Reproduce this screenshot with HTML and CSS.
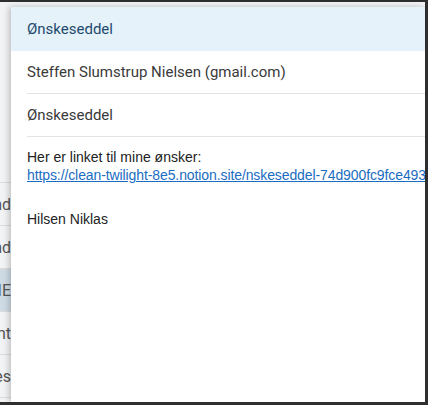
FILE: index.html
```html
<!DOCTYPE html>
<html lang="da">
<head>
<meta charset="utf-8">
<title>Ønskeseddel</title>
<link rel="stylesheet" href="styles.css">
</head>
<body>
<div class="frame">
  <div class="bg-list">
    <div class="bg-top"></div>
    <div class="bg-row"><span>Send</span></div>
    <div class="bg-row"><span>Send</span></div>
    <div class="bg-row selected"><span>NSIE</span></div>
    <div class="bg-row"><span>Print</span></div>
    <div class="bg-row"><span>Notes</span></div>
  </div>
  <div class="panel">
    <div class="panel-header">Ønskeseddel</div>
    <div class="field">Steffen Slumstrup Nielsen (gmail.com)</div>
    <div class="field">Ønskeseddel</div>
    <div class="message">
      <p class="lines">Her er linket til mine ønsker:<br><a href="#" class="link">https://clean-twilight-8e5.notion.site/nskeseddel-74d900fc9fce4930a1b2</a></p>
      <p class="sign">Hilsen Niklas</p>
    </div>
  </div>
</div>
</body>
</html>
```

FILE: styles.css
```css
html, body {
  margin: 0;
  padding: 0;
  background: #ffffff;
}

.frame {
  position: relative;
  width: 428px;
  height: 405px;
  box-sizing: border-box;
  border-top: 2px solid #2e2e2e;
  border-right: 3px solid #2e2e2e;
  border-bottom: 3px solid #2e2e2e;
  background: #f2f3f4;
  overflow: hidden;
  font-family: Roboto, "Liberation Sans", sans-serif;
}

.bg-list {
  width: 11px;
  display: flex;
  flex-direction: column;
}

.bg-top {
  height: 180px;
  border-bottom: 1px solid #dcdcdc;
}

.bg-row {
  height: 42px;
  border-bottom: 1px solid #dcdcdc;
  display: flex;
  justify-content: flex-end;
  align-items: center;
  overflow: hidden;
  font-size: 16px;
  color: #555;
  white-space: nowrap;
}

.bg-row.selected {
  background: #cfdbe4;
}

.panel {
  position: absolute;
  left: 11px;
  top: 5px;
  right: 0;
  bottom: 0;
  background: #ffffff;
  box-shadow: -2px 0 6px rgba(0, 0, 0, 0.22);
  display: flex;
  flex-direction: column;
}

.panel-header {
  height: 44px;
  background: #e5f2f9;
  color: #1f4a6e;
  font-size: 15px;
  display: flex;
  align-items: center;
  padding-left: 16px;
}

.field {
  height: 42px;
  margin-left: 16px;
  border-bottom: 1px solid #e3e3e3;
  display: flex;
  align-items: center;
  font-size: 15px;
  color: #3a3a3a;
}

.message {
  padding: 11px 0 0 16px;
  font-family: "Liberation Sans", Arial, sans-serif;
  font-size: 14px;
  color: #222;
}

.message p {
  margin: 0;
  white-space: nowrap;
}

.lines {
  line-height: 18px;
}

.link {
  color: #1a6dc2;
  text-decoration: underline;
  letter-spacing: -0.1px;
}

.sign {
  margin-top: 26px !important;
  line-height: 18px;
}
```
